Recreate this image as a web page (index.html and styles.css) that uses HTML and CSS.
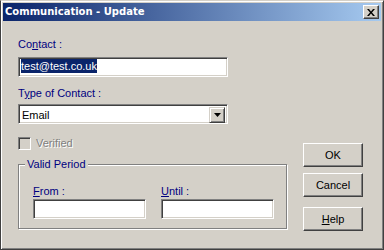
FILE: index.html
```html
<!DOCTYPE html>
<html lang="en">
<head>
    <meta charset="UTF-8">
    <title>Communication - Update</title>
    <link rel="stylesheet" href="styles.css">
</head>
<body>
    <div class="window">
        <div class="titlebar">
            <span class="title">Communication - Update</span>
            <span class="close-btn">
                <svg width="8" height="7" viewBox="0 0 8 7">
                    <path d="M0 0h2l2 2.5L6 0h2L5 3.5 8 7H6L4 4.5 2 7H0l3-3.5z" fill="#000"/>
                </svg>
            </span>
        </div>

        <div class="dialog-body">
            <div class="form-col">
                <div class="label">Co<u>n</u>tact :</div>
                <div class="field field-wide"><span class="selected">test@test.co.uk</span></div>

                <div class="label label-type">T<u>y</u>pe of Contact :</div>
                <div class="field field-wide combo">
                    <span class="combo-value">Email</span>
                    <span class="combo-arrow">
                        <svg width="7" height="4" viewBox="0 0 7 4"><path d="M0 0h7L3.5 4z" fill="#000"/></svg>
                    </span>
                </div>

                <div class="check-row">
                    <span class="checkbox"></span>
                    <span class="check-label">Verified</span>
                </div>

                <div class="group">
                    <span class="group-title">Valid Period</span>
                    <div class="group-fields">
                        <div class="group-field">
                            <div class="label"><u>F</u>rom :</div>
                            <div class="field field-small"></div>
                        </div>
                        <div class="group-field">
                            <div class="label"><u>U</u>ntil :</div>
                            <div class="field field-small"></div>
                        </div>
                    </div>
                </div>
            </div>

            <div class="button-col">
                <div class="btn">OK</div>
                <div class="btn">Cancel</div>
                <div class="btn btn-help"><u>H</u>elp</div>
            </div>
        </div>
    </div>
</body>
</html>
```

FILE: styles.css
```css
body {
    margin: 0;
    background: #d4d0c8;
    font-family: "Liberation Sans", Arial, sans-serif;
    font-size: 11px;
}
.window {
    width: 384px;
    height: 250px;
    box-sizing: border-box;
    padding: 2px;
    background: #d4d0c8;
    border: 1px solid;
    border-color: #d4d0c8 #404040 #404040 #404040;
    box-shadow: inset 1px 1px #fff, inset -1px -1px #808080;
}
.titlebar {
    height: 18px;
    display: flex;
    align-items: center;
    justify-content: space-between;
    padding: 0 2px;
    background: linear-gradient(to right, #0a246a, #a6caf0);
}
.title {
    color: #fff;
    font-family: "DejaVu Sans", Tahoma, sans-serif;
    font-weight: bold;
    font-size: 10px;
    line-height: 18px;
}
.close-btn {
    width: 16px;
    height: 14px;
    box-sizing: border-box;
    display: flex;
    align-items: center;
    justify-content: center;
    background: #d4d0c8;
    border: 1px solid;
    border-color: #fff #404040 #404040 #fff;
    box-shadow: inset -1px -1px #808080;
}
.dialog-body {
    display: flex;
    gap: 15px;
    padding: 17px 0 0 15px;
}
.form-col {
    width: 270px;
}
.label {
    color: #000080;
    line-height: 13px;
    height: 13px;
}
.label-type {
    margin-top: 10px;
}
.field {
    height: 20px;
    box-sizing: border-box;
    background: #fff;
    border: 1px solid;
    border-color: #808080 #fff #fff #808080;
    box-shadow: inset 1px 1px #404040, inset -1px -1px #d4d0c8;
    padding: 2px 1px;
}
.field-wide {
    width: 210px;
    margin-top: 6px;
}
.label-type + .field {
    margin-top: 4px;
}
.selected {
    display: inline-block;
    background: #0a246a;
    color: #fff;
    height: 14px;
    line-height: 14px;
    margin: -1px 0 0 1px;
}
.combo {
    display: flex;
    justify-content: space-between;
    padding: 2px 2px 2px 3px;
    line-height: 16px;
}
.combo-value {
    color: #000;
}
.combo-arrow {
    width: 16px;
    height: 16px;
    box-sizing: border-box;
    display: flex;
    align-items: center;
    justify-content: center;
    background: #d4d0c8;
    border: 1px solid;
    border-color: #d4d0c8 #404040 #404040 #d4d0c8;
    box-shadow: inset 1px 1px #fff, inset -1px -1px #808080;
}
.check-row {
    display: flex;
    align-items: center;
    gap: 5px;
    margin-top: 13px;
    height: 13px;
}
.checkbox {
    width: 13px;
    height: 13px;
    box-sizing: border-box;
    background: #d4d0c8;
    border: 1px solid;
    border-color: #808080 #fff #fff #808080;
    box-shadow: inset 1px 1px #404040, inset -1px -1px #d4d0c8;
}
.check-label {
    color: #808080;
    text-shadow: 1px 1px #fff;
    line-height: 13px;
}
.group {
    position: relative;
    width: 269px;
    box-sizing: border-box;
    margin-top: 14px;
    padding: 20px 12px 9px 14px;
    border: 1px solid #808080;
    box-shadow: inset 1px 1px #fff, 1px 1px #fff;
}
.group-title {
    position: absolute;
    top: -7px;
    left: 6px;
    padding: 0 2px;
    background: #d4d0c8;
    color: #000080;
    line-height: 13px;
}
.group-fields {
    display: flex;
    gap: 15px;
}
.field-small {
    width: 113px;
    margin-top: 1px;
}
.button-col {
    display: flex;
    flex-direction: column;
    gap: 6px;
    margin-top: 105px;
}
.btn {
    width: 60px;
    height: 24px;
    box-sizing: border-box;
    display: flex;
    align-items: center;
    justify-content: center;
    background: #d4d0c8;
    border: 1px solid;
    border-color: #fff #404040 #404040 #fff;
    box-shadow: inset -1px -1px #808080;
    color: #000;
}
.btn-help {
    margin-top: 4px;
}
```
